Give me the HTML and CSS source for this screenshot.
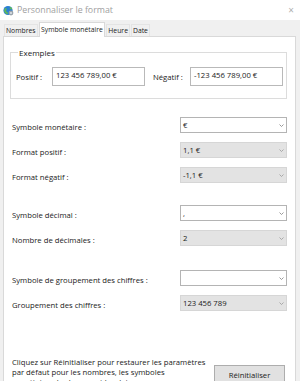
FILE: index.html
```html
<!DOCTYPE html>
<html lang="fr">
<head>
<meta charset="utf-8">
<title>Personnaliser le format</title>
<link rel="stylesheet" href="styles.css">
</head>
<body>
<div class="window">
  <div class="titlebar">
    <svg class="app-icon" width="11" height="11" viewBox="0 0 11 11">
      <circle cx="5" cy="5.5" r="4.6" fill="#2a7fd4"/>
      <path d="M2 3.2 C3.5 2.6 4.2 4 3.4 5 C2.6 6 3.6 7.2 4.6 7 L5 9.6 C3 9.4 1.2 7.8 1 5.6 Z" fill="#5cb85c"/>
      <path d="M6 1.2 C7.2 1.6 7.6 2.6 6.8 3.3 C6.2 3.9 7 4.6 7.8 4.2 L9.4 4.6 C9.2 3 8 1.6 6 1.2 Z" fill="#5cb85c"/>
      <circle cx="8" cy="8" r="2.4" fill="#9aa4ad"/>
      <circle cx="8" cy="8" r="0.9" fill="#e8ecef"/>
    </svg>
    <span class="title">Personnaliser le format</span>
    <span class="close">×</span>
  </div>
  <div class="tabs">
    <div class="tab">Nombres</div>
    <div class="tab active">Symbole monétaire</div>
    <div class="tab">Heure</div>
    <div class="tab">Date</div>
  </div>
  <div class="panel">
    <fieldset class="group">
      <legend>Exemples</legend>
      <div class="examples">
        <span class="ex-label">Positif :</span>
        <div class="ex-box">123 456 789,00 €</div>
        <span class="ex-label neg">Négatif :</span>
        <div class="ex-box">-123 456 789,00 €</div>
      </div>
    </fieldset>

    <div class="section first">
      <div class="row">
        <span class="label">Symbole monétaire :</span>
        <div class="select">€<svg class="chev" width="5" height="3" viewBox="0 0 5 3"><polyline points="0.5,0.5 2.5,2.5 4.5,0.5" fill="none" stroke="#808080" stroke-width="0.8"/></svg></div>
      </div>
      <div class="row">
        <span class="label">Format positif :</span>
        <div class="select disabled">1,1 €<svg class="chev" width="5" height="3" viewBox="0 0 5 3"><polyline points="0.5,0.5 2.5,2.5 4.5,0.5" fill="none" stroke="#9a9a9a" stroke-width="0.8"/></svg></div>
      </div>
      <div class="row">
        <span class="label">Format négatif :</span>
        <div class="select disabled">-1,1 €<svg class="chev" width="5" height="3" viewBox="0 0 5 3"><polyline points="0.5,0.5 2.5,2.5 4.5,0.5" fill="none" stroke="#9a9a9a" stroke-width="0.8"/></svg></div>
      </div>
    </div>

    <div class="section">
      <div class="row">
        <span class="label">Symbole décimal :</span>
        <div class="select">,<svg class="chev" width="5" height="3" viewBox="0 0 5 3"><polyline points="0.5,0.5 2.5,2.5 4.5,0.5" fill="none" stroke="#808080" stroke-width="0.8"/></svg></div>
      </div>
      <div class="row">
        <span class="label">Nombre de décimales :</span>
        <div class="select disabled">2<svg class="chev" width="5" height="3" viewBox="0 0 5 3"><polyline points="0.5,0.5 2.5,2.5 4.5,0.5" fill="none" stroke="#9a9a9a" stroke-width="0.8"/></svg></div>
      </div>
    </div>

    <div class="section third">
      <div class="row">
        <span class="label">Symbole de groupement des chiffres :</span>
        <div class="select"><svg class="chev" width="5" height="3" viewBox="0 0 5 3"><polyline points="0.5,0.5 2.5,2.5 4.5,0.5" fill="none" stroke="#808080" stroke-width="0.8"/></svg></div>
      </div>
      <div class="row">
        <span class="label">Groupement des chiffres :</span>
        <div class="select disabled">123 456 789<svg class="chev" width="5" height="3" viewBox="0 0 5 3"><polyline points="0.5,0.5 2.5,2.5 4.5,0.5" fill="none" stroke="#9a9a9a" stroke-width="0.8"/></svg></div>
      </div>
    </div>

    <div class="footer">
      <p class="note">Cliquez sur Réinitialiser pour restaurer les paramètres<br>par défaut pour les nombres, les symboles<br>monétaires, les heures et les dates.</p>
      <div class="button">Réinitialiser</div>
    </div>
  </div>
</div>
</body>
</html>
```

FILE: styles.css
```css
html, body {
  margin: 0;
  padding: 0;
  height: 381px;
  overflow: hidden;
}

body {
  background: #f0f0f0;
  font-family: "Open Sans", "Noto Sans", "DejaVu Sans", sans-serif;
  font-size: 7.7px;
  color: #1a1a1a;
}

.window {
  width: 300px;
}

.titlebar {
  height: 20px;
  background: #ffffff;
  display: flex;
  align-items: center;
  padding-left: 3px;
  box-sizing: border-box;
}

.app-icon {
  flex: none;
  margin-right: 3px;
}

.title {
  color: #a0a0a0;
  font-size: 8.8px;
  flex: 1;
}

.close {
  color: #b0b0b0;
  font-size: 10px;
  width: 18px;
  text-align: center;
}

.tabs {
  display: flex;
  align-items: flex-end;
  height: 16px;
  padding-left: 4px;
  box-sizing: border-box;
}

.tab {
  height: 12px;
  line-height: 12px;
  padding: 0 1px;
  margin-right: 1px;
  font-size: 6.8px;
  background: #f0f0f0;
  border: 1px solid #e4e4e4;
  border-bottom: none;
  box-sizing: border-box;
}

.tab.active {
  height: 15px;
  line-height: 14px;
  padding: 0 1.5px;
  background: #ffffff;
  border-color: #d9d9d9;
  margin-bottom: -1px;
  position: relative;
  z-index: 1;
}

.panel {
  margin-left: 3px;
  width: 293px;
  height: 360px;
  background: #ffffff;
  border: 1px solid #d9d9d9;
  box-sizing: border-box;
  padding: 10px 8px 0 6px;
}

.group {
  margin: 0;
  padding: 9px 0 12px 5px;
  width: 277px;
  box-sizing: border-box;
  border: 1px solid #dcdcdc;
}

.group legend {
  padding: 0 1px;
  margin-left: 2px;
  font-size: 8px;
}

.examples {
  display: flex;
  align-items: center;
}

.ex-label {
  width: 36px;
}

.ex-label.neg {
  margin-left: 8px;
  width: 37px;
}

.ex-box {
  width: 93px;
  height: 19px;
  box-sizing: border-box;
  border: 1px solid #b9b9b9;
  padding: 2px 0 0 3px;
  line-height: 11px;
}

.section {
  display: flex;
  flex-direction: column;
  gap: 9px;
  margin-top: 22px;
  padding-left: 2px;
}

.section.first {
  margin-top: 18px;
}

.section.third {
  margin-top: 24px;
}

.row {
  display: flex;
  align-items: center;
  height: 16px;
}

.label {
  width: 168px;
  flex: none;
  padding-top: 3px;
}

.select {
  width: 107px;
  height: 16px;
  box-sizing: border-box;
  border: 1px solid #b4b4b4;
  background: #ffffff;
  display: flex;
  align-items: center;
  justify-content: space-between;
  padding: 0 2px 0 2px;
}

.select.disabled {
  background: #e3e3e3;
  border-color: #d6d6d6;
}

.chev {
  flex: none;
  margin-left: auto;
}

.footer {
  display: flex;
  justify-content: space-between;
  margin-top: 46px;
  padding-left: 2px;
}

.note {
  margin: 0;
  width: 200px;
  flex: none;
  line-height: 10px;
  white-space: nowrap;
}

.button {
  width: 71px;
  height: 20px;
  box-sizing: border-box;
  border: 1px solid #adadad;
  background: #e1e1e1;
  display: flex;
  align-items: center;
  justify-content: center;
  margin-top: 8px;
  margin-right: 2px;
}
```
